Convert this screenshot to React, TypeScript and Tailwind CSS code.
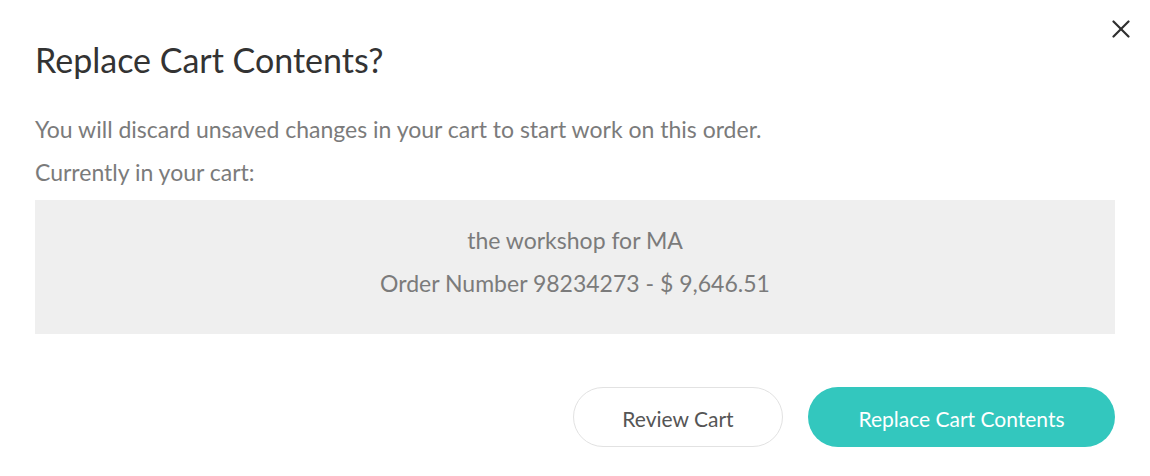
export default function App() {
  return (
    <div className="relative h-[476px] w-[1150px] bg-white px-[35px] font-['Lato',sans-serif]">
      <button className="absolute right-[20px] top-[20px] flex h-[18px] w-[18px] items-center justify-center" aria-label="Close">
        <svg width="18" height="18" viewBox="0 0 18 18" fill="none" stroke="#2f2f2f" strokeWidth="2.2" strokeLinecap="round">
          <line x1="1.5" y1="1.5" x2="16.5" y2="16.5" />
          <line x1="16.5" y1="1.5" x2="1.5" y2="16.5" />
        </svg>
      </button>

      <h2 className="pt-[40px] text-[34px] leading-[40px] text-[#333333]">Replace Cart Contents?</h2>

      <div className="mt-[28px] text-[23px] leading-[43px] text-[#7b7b7b]">
        <p>You will discard unsaved changes in your cart to start work on this order.</p>
        <p>Currently in your cart:</p>
      </div>

      <div className="mt-[6px] h-[134px] bg-[#efefef] pt-[19px] text-center text-[23px] leading-[43px] text-[#7b7b7b]">
        <p>the workshop for MA</p>
        <p>Order Number 98234273 - $ 9,646.51</p>
      </div>

      <div className="mt-[53px] flex justify-end gap-[25px]">
        <button className="h-[60px] w-[210px] rounded-full border border-[#e2e2e2] bg-white pt-[3px] text-[21px] text-[#555555]">
          Review Cart
        </button>
        <button className="h-[60px] w-[307px] rounded-full bg-[#33c7be] pt-[3px] text-[21px] text-white">
          Replace Cart Contents
        </button>
      </div>
    </div>
  );
}
